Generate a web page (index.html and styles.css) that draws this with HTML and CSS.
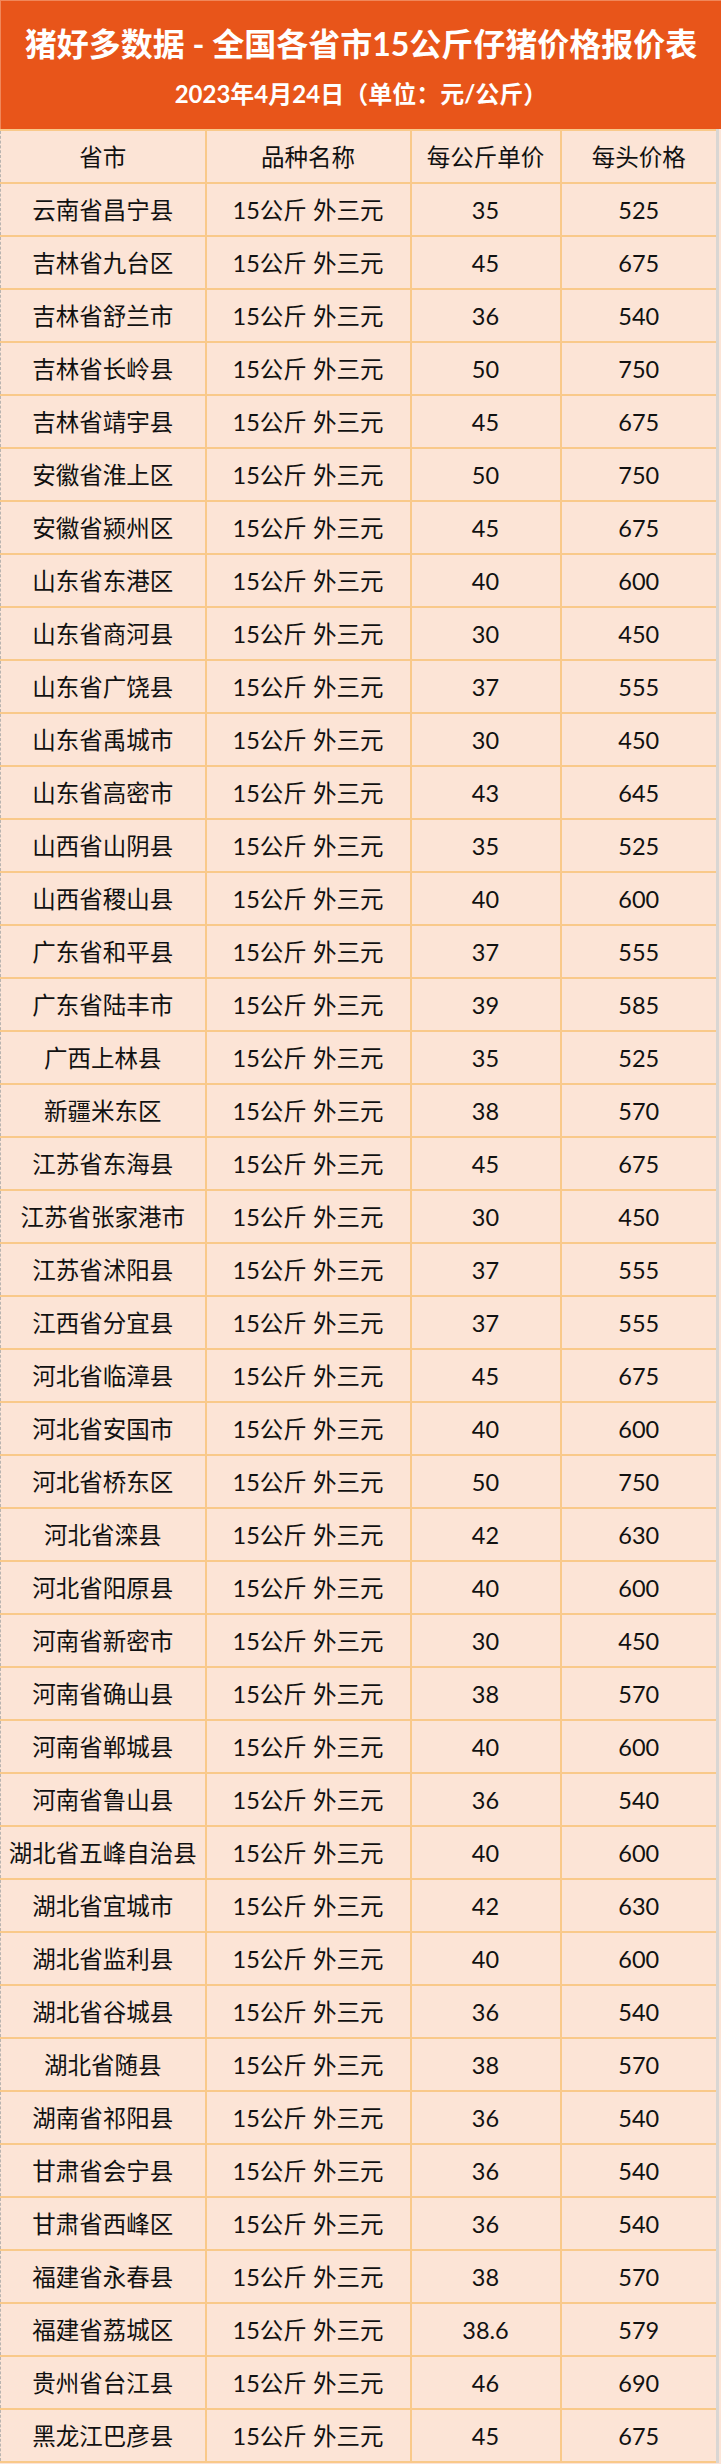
FILE: index.html
```html
<!DOCTYPE html>
<html lang="zh-CN">
<head>
<meta charset="utf-8">
<title>猪好多数据 - 全国各省市15公斤仔猪价格报价表</title>
<link rel="stylesheet" href="styles.css">
</head>
<body>
<div class="sheet">
  <header class="banner">
    <h1 class="title">猪好多数据 - 全国各省市15公斤仔猪价格报价表</h1>
    <p class="subtitle">2023年4月24日（单位：元/公斤）</p>
  </header>
  <table class="prices">
    <colgroup>
      <col class="c1"><col class="c2"><col class="c3"><col class="c4">
    </colgroup>
    <thead>
      <tr><th>省市</th><th>品种名称</th><th>每公斤单价</th><th>每头价格</th></tr>
    </thead>
    <tbody>
      <tr><td>云南省昌宁县</td><td>15公斤 外三元</td><td>35</td><td>525</td></tr>
      <tr><td>吉林省九台区</td><td>15公斤 外三元</td><td>45</td><td>675</td></tr>
      <tr><td>吉林省舒兰市</td><td>15公斤 外三元</td><td>36</td><td>540</td></tr>
      <tr><td>吉林省长岭县</td><td>15公斤 外三元</td><td>50</td><td>750</td></tr>
      <tr><td>吉林省靖宇县</td><td>15公斤 外三元</td><td>45</td><td>675</td></tr>
      <tr><td>安徽省淮上区</td><td>15公斤 外三元</td><td>50</td><td>750</td></tr>
      <tr><td>安徽省颍州区</td><td>15公斤 外三元</td><td>45</td><td>675</td></tr>
      <tr><td>山东省东港区</td><td>15公斤 外三元</td><td>40</td><td>600</td></tr>
      <tr><td>山东省商河县</td><td>15公斤 外三元</td><td>30</td><td>450</td></tr>
      <tr><td>山东省广饶县</td><td>15公斤 外三元</td><td>37</td><td>555</td></tr>
      <tr><td>山东省禹城市</td><td>15公斤 外三元</td><td>30</td><td>450</td></tr>
      <tr><td>山东省高密市</td><td>15公斤 外三元</td><td>43</td><td>645</td></tr>
      <tr><td>山西省山阴县</td><td>15公斤 外三元</td><td>35</td><td>525</td></tr>
      <tr><td>山西省稷山县</td><td>15公斤 外三元</td><td>40</td><td>600</td></tr>
      <tr><td>广东省和平县</td><td>15公斤 外三元</td><td>37</td><td>555</td></tr>
      <tr><td>广东省陆丰市</td><td>15公斤 外三元</td><td>39</td><td>585</td></tr>
      <tr><td>广西上林县</td><td>15公斤 外三元</td><td>35</td><td>525</td></tr>
      <tr><td>新疆米东区</td><td>15公斤 外三元</td><td>38</td><td>570</td></tr>
      <tr><td>江苏省东海县</td><td>15公斤 外三元</td><td>45</td><td>675</td></tr>
      <tr><td>江苏省张家港市</td><td>15公斤 外三元</td><td>30</td><td>450</td></tr>
      <tr><td>江苏省沭阳县</td><td>15公斤 外三元</td><td>37</td><td>555</td></tr>
      <tr><td>江西省分宜县</td><td>15公斤 外三元</td><td>37</td><td>555</td></tr>
      <tr><td>河北省临漳县</td><td>15公斤 外三元</td><td>45</td><td>675</td></tr>
      <tr><td>河北省安国市</td><td>15公斤 外三元</td><td>40</td><td>600</td></tr>
      <tr><td>河北省桥东区</td><td>15公斤 外三元</td><td>50</td><td>750</td></tr>
      <tr><td>河北省滦县</td><td>15公斤 外三元</td><td>42</td><td>630</td></tr>
      <tr><td>河北省阳原县</td><td>15公斤 外三元</td><td>40</td><td>600</td></tr>
      <tr><td>河南省新密市</td><td>15公斤 外三元</td><td>30</td><td>450</td></tr>
      <tr><td>河南省确山县</td><td>15公斤 外三元</td><td>38</td><td>570</td></tr>
      <tr><td>河南省郸城县</td><td>15公斤 外三元</td><td>40</td><td>600</td></tr>
      <tr><td>河南省鲁山县</td><td>15公斤 外三元</td><td>36</td><td>540</td></tr>
      <tr><td>湖北省五峰自治县</td><td>15公斤 外三元</td><td>40</td><td>600</td></tr>
      <tr><td>湖北省宜城市</td><td>15公斤 外三元</td><td>42</td><td>630</td></tr>
      <tr><td>湖北省监利县</td><td>15公斤 外三元</td><td>40</td><td>600</td></tr>
      <tr><td>湖北省谷城县</td><td>15公斤 外三元</td><td>36</td><td>540</td></tr>
      <tr><td>湖北省随县</td><td>15公斤 外三元</td><td>38</td><td>570</td></tr>
      <tr><td>湖南省祁阳县</td><td>15公斤 外三元</td><td>36</td><td>540</td></tr>
      <tr><td>甘肃省会宁县</td><td>15公斤 外三元</td><td>36</td><td>540</td></tr>
      <tr><td>甘肃省西峰区</td><td>15公斤 外三元</td><td>36</td><td>540</td></tr>
      <tr><td>福建省永春县</td><td>15公斤 外三元</td><td>38</td><td>570</td></tr>
      <tr><td>福建省荔城区</td><td>15公斤 外三元</td><td>38.6</td><td>579</td></tr>
      <tr><td>贵州省台江县</td><td>15公斤 外三元</td><td>46</td><td>690</td></tr>
      <tr><td>黑龙江巴彦县</td><td>15公斤 外三元</td><td>45</td><td>675</td></tr>
    </tbody>
  </table>
</div>
</body>
</html>
```
FILE: styles.css
```css
html, body {
  margin: 0;
  padding: 0;
  background: #fce4d6;
}

.sheet {
  width: 721px;
  background: #fce4d6;
}

.banner {
  box-sizing: border-box;
  height: 129px;
  background: #e8551a;
  border-top: 1px solid #f0875a;
  border-left: 1px solid #f0875a;
  display: flex;
  flex-direction: column;
  align-items: center;
  color: #ffffff;
  font-family: Lato, "Noto Sans CJK SC", sans-serif;
  font-weight: 700;
}

.title {
  margin: 23px 0 0;
  font-size: 32px;
  line-height: 40px;
  font-weight: 700;
  white-space: nowrap;
}

.subtitle {
  margin: 15px 0 0;
  font-size: 24px;
  line-height: 30px;
  font-weight: 700;
  white-space: nowrap;
}

.prices {
  width: 719px;
  table-layout: fixed;
  border-collapse: collapse;
  border-left: 1px dashed #b9b4b0;
  font-family: Lato, "Noto Sans CJK SC", sans-serif;
  font-size: 23.5px;
  color: #111111;
  background: #fce4d6;
}

.c1 { width: 205px; }
.c2 { width: 205px; }
.c3 { width: 150px; }
.c4 { width: 157px; }

.prices tr {
  height: 53px;
}

.prices th,
.prices td {
  border: 2px solid #f9c98a;
  padding: 0;
  text-align: center;
  vertical-align: middle;
  white-space: nowrap;
  line-height: 30px;
  font-weight: 400;
}

.prices th:first-child,
.prices td:first-child {
  border-left: 1px dashed #b9b4b0;
}

.prices th:last-child,
.prices td:last-child {
  border-right: 3px solid #d9d6d3;
}
```
